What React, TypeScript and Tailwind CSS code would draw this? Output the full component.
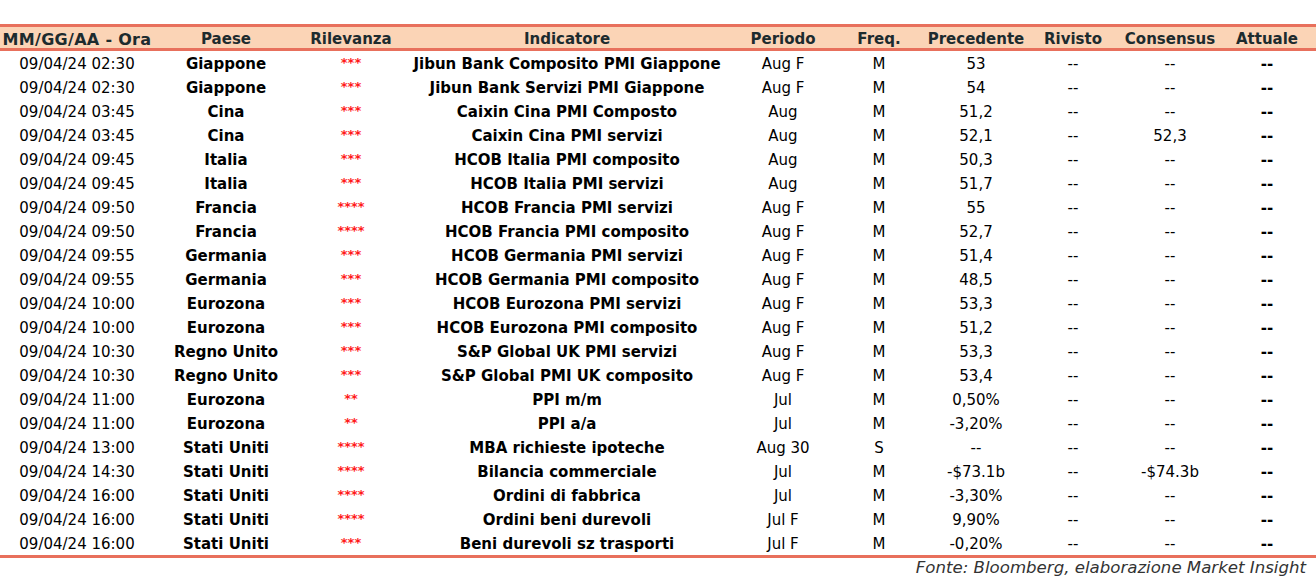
import React from 'react';

type Row = [string, string, string, string, string, string, string, string, string];

const rows: Row[] = [
  ['09/04/24 02:30', 'Giappone', '***', 'Jibun Bank Composito PMI Giappone', 'Aug F', 'M', '53', '--', '--'],
  ['09/04/24 02:30', 'Giappone', '***', 'Jibun Bank Servizi PMI Giappone', 'Aug F', 'M', '54', '--', '--'],
  ['09/04/24 03:45', 'Cina', '***', 'Caixin Cina PMI Composto', 'Aug', 'M', '51,2', '--', '--'],
  ['09/04/24 03:45', 'Cina', '***', 'Caixin Cina PMI servizi', 'Aug', 'M', '52,1', '--', '52,3'],
  ['09/04/24 09:45', 'Italia', '***', 'HCOB Italia PMI composito', 'Aug', 'M', '50,3', '--', '--'],
  ['09/04/24 09:45', 'Italia', '***', 'HCOB Italia PMI servizi', 'Aug', 'M', '51,7', '--', '--'],
  ['09/04/24 09:50', 'Francia', '****', 'HCOB Francia PMI servizi', 'Aug F', 'M', '55', '--', '--'],
  ['09/04/24 09:50', 'Francia', '****', 'HCOB Francia PMI composito', 'Aug F', 'M', '52,7', '--', '--'],
  ['09/04/24 09:55', 'Germania', '***', 'HCOB Germania PMI servizi', 'Aug F', 'M', '51,4', '--', '--'],
  ['09/04/24 09:55', 'Germania', '***', 'HCOB Germania PMI composito', 'Aug F', 'M', '48,5', '--', '--'],
  ['09/04/24 10:00', 'Eurozona', '***', 'HCOB Eurozona PMI servizi', 'Aug F', 'M', '53,3', '--', '--'],
  ['09/04/24 10:00', 'Eurozona', '***', 'HCOB Eurozona PMI composito', 'Aug F', 'M', '51,2', '--', '--'],
  ['09/04/24 10:30', 'Regno Unito', '***', 'S&P Global UK PMI servizi', 'Aug F', 'M', '53,3', '--', '--'],
  ['09/04/24 10:30', 'Regno Unito', '***', 'S&P Global PMI UK composito', 'Aug F', 'M', '53,4', '--', '--'],
  ['09/04/24 11:00', 'Eurozona', '**', 'PPI m/m', 'Jul', 'M', '0,50%', '--', '--'],
  ['09/04/24 11:00', 'Eurozona', '**', 'PPI a/a', 'Jul', 'M', '-3,20%', '--', '--'],
  ['09/04/24 13:00', 'Stati Uniti', '****', 'MBA richieste ipoteche', 'Aug 30', 'S', '--', '--', '--'],
  ['09/04/24 14:30', 'Stati Uniti', '****', 'Bilancia commerciale', 'Jul', 'M', '-$73.1b', '--', '-$74.3b'],
  ['09/04/24 16:00', 'Stati Uniti', '****', 'Ordini di fabbrica', 'Jul', 'M', '-3,30%', '--', '--'],
  ['09/04/24 16:00', 'Stati Uniti', '****', 'Ordini beni durevoli', 'Jul F', 'M', '9,90%', '--', '--'],
  ['09/04/24 16:00', 'Stati Uniti', '***', 'Beni durevoli sz trasporti', 'Jul F', 'M', '-0,20%', '--', '--'],
];

const headers = ['MM/GG/AA - Ora', 'Paese', 'Rilevanza', 'Indicatore', 'Periodo', 'Freq.', 'Precedente', 'Rivisto', 'Consensus', 'Attuale'];

const cols = 'grid grid-cols-[150px_148px_102px_330px_102px_90px_104px_90px_104px_90px]';

export default function App() {
  return (
    <div className="w-[1316px] h-[581px] bg-white pt-[24px] font-['DejaVu_Sans',sans-serif] text-[15px] text-black">
      <div className="border-t-[3px] border-b-[3px] border-[#e8705c] pl-[2px]">
        <div className={`${cols} h-[24px] bg-[#fbd4b6] border-b-[3px] border-[#e8705c] -ml-[2px] pl-[2px] pt-[4px] items-center font-bold text-[#1d2b2e] leading-none`}>
          {headers.map((h) => (
            <div key={h} className={`text-center whitespace-nowrap ${h === 'MM/GG/AA - Ora' ? 'text-[16px] tracking-[0.3px]' : ''}`}>{h}</div>
          ))}
        </div>
        {rows.map((r, i) => (
          <div key={i} className={`${cols} h-[24px] pt-[3px] items-center leading-none whitespace-nowrap`}>
            <div className="text-center">{r[0]}</div>
            <div className="text-center font-bold">{r[1]}</div>
            <div className="text-center font-bold text-[#ff1a1a] text-[13px] self-start pt-[2px]">{r[2]}</div>
            <div className="text-center font-bold">{r[3]}</div>
            <div className="text-center">{r[4]}</div>
            <div className="text-center">{r[5]}</div>
            <div className="text-center">{r[6]}</div>
            <div className="text-center">{r[7]}</div>
            <div className="text-center">{r[8]}</div>
            <div className="text-center font-bold">--</div>
          </div>
        ))}
      </div>
      <div className="flex justify-end pr-[10px] pt-[2px] italic text-[16.6px] text-[#333] leading-none">
        Fonte: Bloomberg, elaborazione Market Insight
      </div>
    </div>
  );
}
